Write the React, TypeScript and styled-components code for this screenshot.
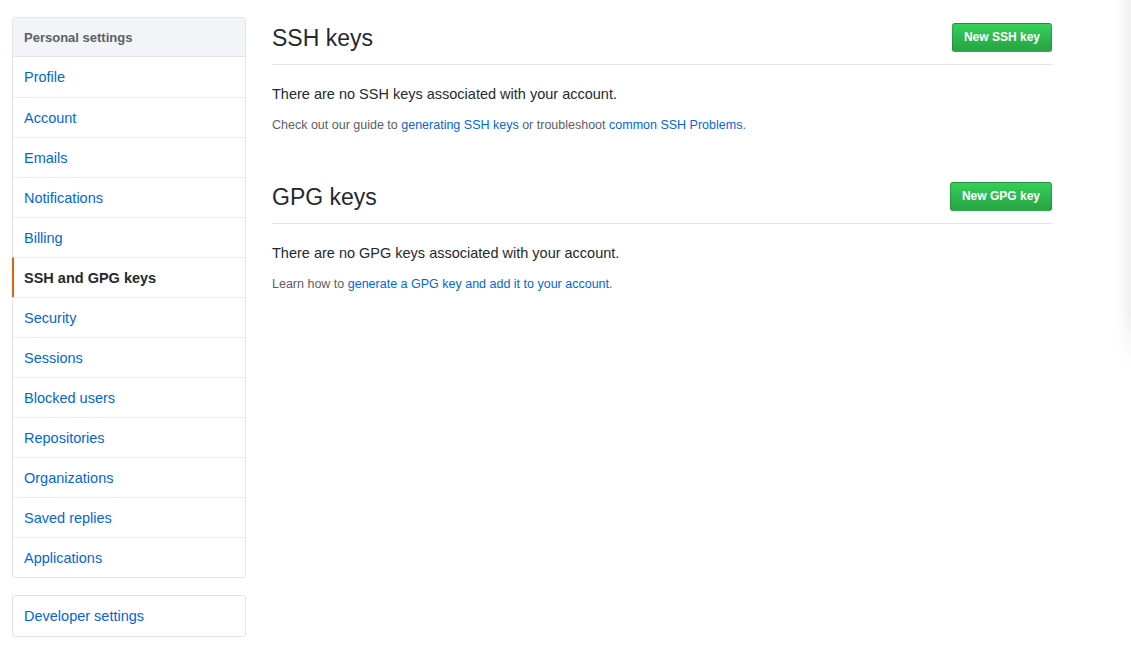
import React from "react";
import styled, { createGlobalStyle } from "styled-components";

const Global = createGlobalStyle`
  html, body { margin: 0; padding: 0; background: #fff; }
  body {
    font-family: "Segoe UI", "Liberation Sans", Arial, sans-serif;
    color: #24292e;
    font-size: 14px;
  }
  * { box-sizing: border-box; }
`;

const Page = styled.div`
  position: relative;
  display: flex;
  align-items: flex-start;
  gap: 26px;
  padding: 17px 0 0 12px;
  width: 1131px;
  height: 649px;
  overflow: hidden;
`;

const EdgeShade = styled.div`
  position: absolute;
  top: 0;
  right: 0;
  width: 14px;
  height: 370px;
  background: linear-gradient(to right, rgba(0,0,0,0), rgba(0,0,0,0.06));
  -webkit-mask-image: linear-gradient(to bottom, #000 85%, transparent);
  mask-image: linear-gradient(to bottom, #000 85%, transparent);
`;

const Side = styled.div`
  width: 234px;
  flex: none;
  display: flex;
  flex-direction: column;
  gap: 17px;
`;

const Menu = styled.nav`
  border: 1px solid #e1e4e8;
  border-radius: 3px;
`;

const MenuHeading = styled.div`
  height: 39px;
  display: flex;
  align-items: center;
  padding: 0 11px;
  background: #f3f4f6;
  border-bottom: 1px solid #e1e4e8;
  border-radius: 3px 3px 0 0;
  font-size: 13px;
  font-weight: 700;
  color: #586069;
`;

const MenuItem = styled.a<{ $active?: boolean }>`
  display: flex;
  align-items: center;
  height: 40px;
  padding: 0 10px;
  border-top: 1px solid #eaecef;
  border-left: 2px solid ${(p) => (p.$active ? "#e36209" : "transparent")};
  margin-left: -1px;
  font-size: 14.5px;
  color: ${(p) => (p.$active ? "#24292e" : "#0366d6")};
  font-weight: ${(p) => (p.$active ? 700 : 400)};
  text-decoration: none;
  cursor: pointer;
  &:first-of-type { border-top: none; }
`;

const Main = styled.main`
  width: 780px;
  flex: none;
  display: flex;
  flex-direction: column;
  gap: 44px;
`;

const Section = styled.section`
  display: flex;
  flex-direction: column;
`;

const Head = styled.div`
  display: flex;
  align-items: center;
  justify-content: space-between;
  padding-bottom: 7px;
  border-bottom: 1px solid #e1e4e8;
`;

const Title = styled.h2`
  margin: 0;
  padding-top: 2px;
  font-size: 23px;
  font-weight: 400;
  line-height: 38px;
  color: #24292e;
`;

const GreenButton = styled.button`
  height: 29px;
  padding: 0 11px;
  border: 1px solid rgba(27, 31, 35, 0.2);
  border-radius: 3px;
  background: linear-gradient(-180deg, #34d058 0%, #28a745 90%);
  color: #fff;
  font-family: inherit;
  font-size: 12px;
  font-weight: 600;
  cursor: pointer;
`;

const Blank = styled.p`
  margin: 21px 0 0;
  font-size: 14.5px;
  color: #24292e;
`;

const Note = styled.p`
  margin: 16px 0 0;
  font-size: 12.5px;
  color: #586069;
`;

const Link = styled.a`
  color: #0366d6;
  text-decoration: none;
`;

const items = [
  "Profile",
  "Account",
  "Emails",
  "Notifications",
  "Billing",
  "SSH and GPG keys",
  "Security",
  "Sessions",
  "Blocked users",
  "Repositories",
  "Organizations",
  "Saved replies",
  "Applications",
];

export default function App() {
  return (
    <>
      <Global />
      <Page>
        <Side>
          <Menu>
            <MenuHeading>Personal settings</MenuHeading>
            {items.map((it) => (
              <MenuItem key={it} $active={it === "SSH and GPG keys"}>
                {it}
              </MenuItem>
            ))}
          </Menu>
          <Menu>
            <MenuItem>Developer settings</MenuItem>
          </Menu>
        </Side>
        <Main>
          <Section>
            <Head>
              <Title>SSH keys</Title>
              <GreenButton>New SSH key</GreenButton>
            </Head>
            <Blank>There are no SSH keys associated with your account.</Blank>
            <Note>
              Check out our guide to <Link>generating SSH keys</Link> or troubleshoot{" "}
              <Link>common SSH Problems</Link>.
            </Note>
          </Section>
          <Section>
            <Head>
              <Title>GPG keys</Title>
              <GreenButton>New GPG key</GreenButton>
            </Head>
            <Blank>There are no GPG keys associated with your account.</Blank>
            <Note>
              Learn how to <Link>generate a GPG key and add it to your account</Link>.
            </Note>
          </Section>
        </Main>
        <EdgeShade />
      </Page>
    </>
  );
}
